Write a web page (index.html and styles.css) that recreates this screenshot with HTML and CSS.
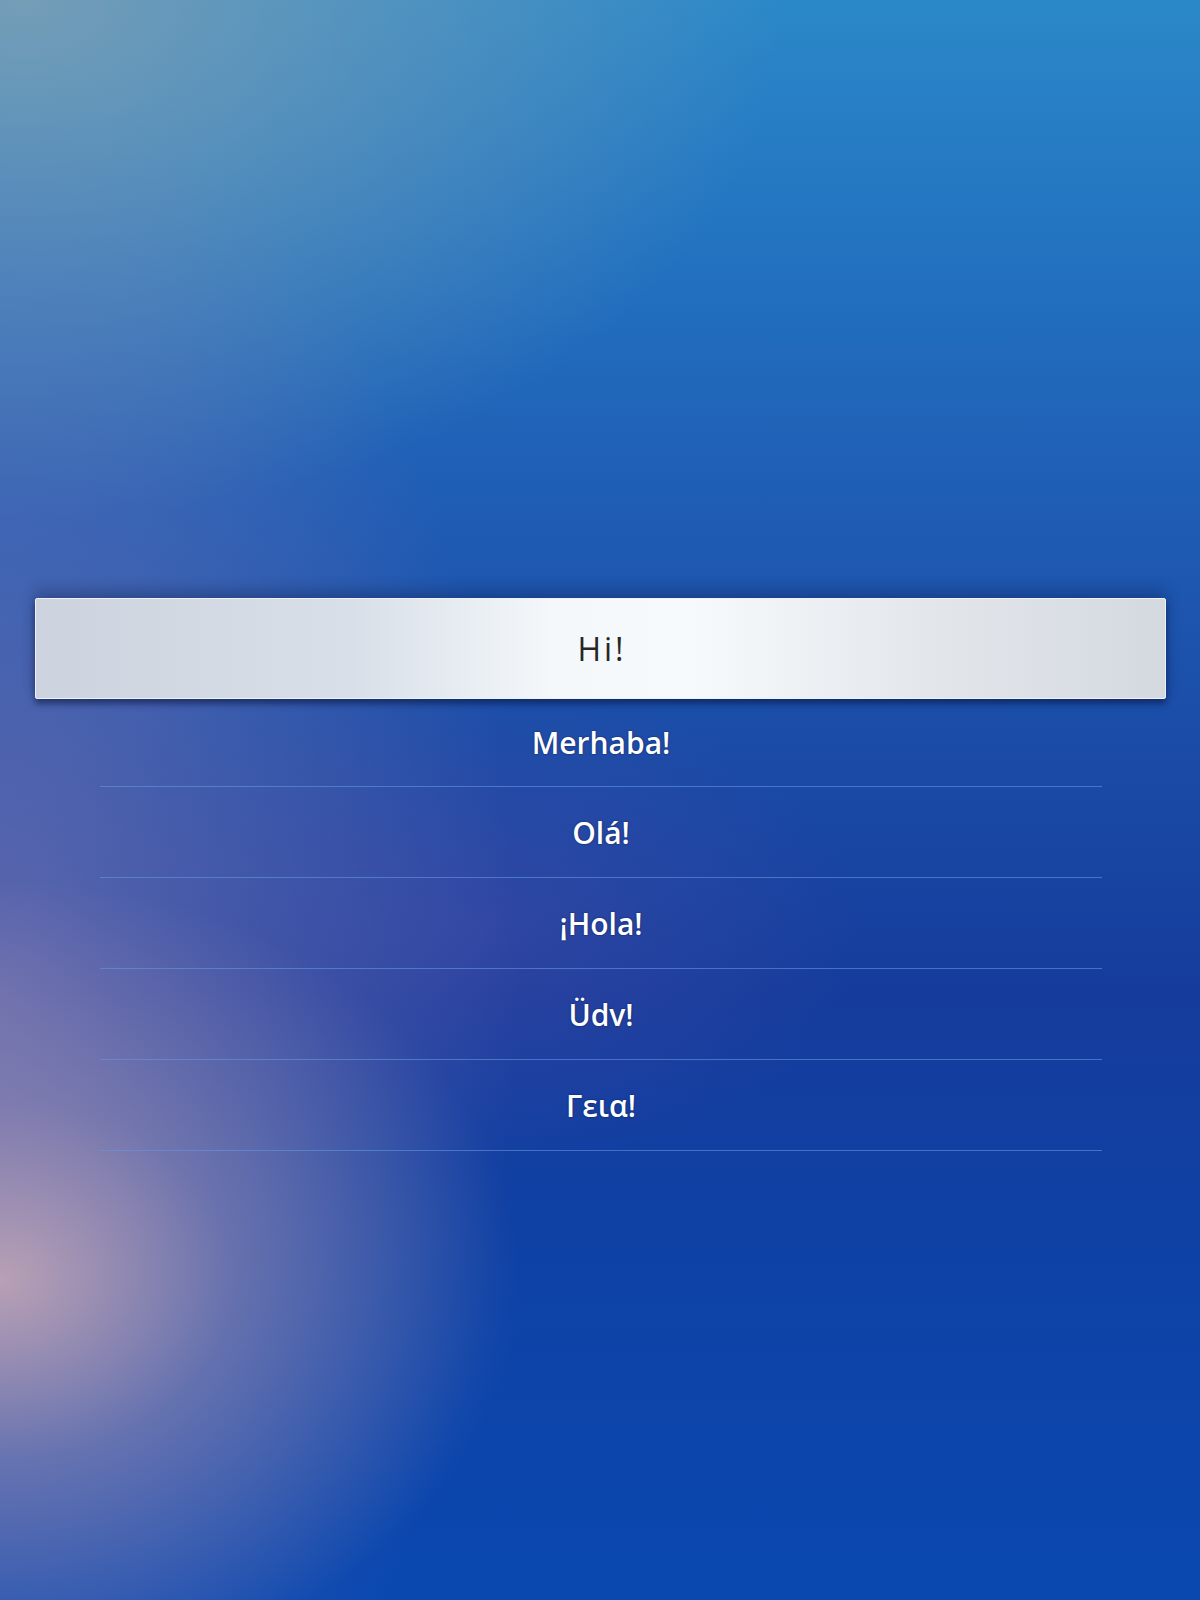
FILE: index.html
```html
<!DOCTYPE html>
<html lang="en">
<head>
<meta charset="utf-8">
<title>Language</title>
<link rel="stylesheet" href="styles.css">
</head>
<body>
<div class="screen">
  <div class="menu">
    <div class="selected"><span>Hi!</span></div>
    <ul class="list">
      <li class="item first">Merhaba!</li>
      <li class="item">Olá!</li>
      <li class="item">¡Hola!</li>
      <li class="item">Üdv!</li>
      <li class="item">Γεια!</li>
    </ul>
  </div>
</div>
</body>
</html>
```

FILE: styles.css
```css
html, body {
  margin: 0;
  padding: 0;
}
body {
  width: 1200px;
  height: 1600px;
  overflow: hidden;
  font-family: "Open Sans", "Noto Sans", sans-serif;
}
.screen {
  width: 1200px;
  height: 1600px;
  box-sizing: border-box;
  padding-top: 598px;
  background:
    radial-gradient(ellipse 520px 400px at 0% 80%, rgba(205,172,182,0.85), rgba(200,168,180,0.35) 45%, rgba(195,165,180,0) 100%),
    radial-gradient(ellipse 520px 900px at 0% 62%, rgba(125,120,180,0.7), rgba(125,120,180,0) 100%),
    radial-gradient(ellipse 380px 240px at 40% 58%, rgba(95,80,170,0.35), rgba(95,80,170,0) 100%),
    radial-gradient(ellipse 760px 520px at 2% 0%, rgba(120,158,182,0.95), rgba(120,158,182,0) 100%),
    linear-gradient(180deg, #2b88c8 0%, #2272c0 16%, #1f5cb4 32%, #1a4aa6 48%, #153c9c 62%, #0e42a6 80%, #0a48b0 100%);
}
.menu {
  display: flex;
  flex-direction: column;
}
.selected {
  margin: 0 34px 0 35px;
  height: 101px;
  box-sizing: border-box;
  display: flex;
  align-items: center;
  justify-content: center;
  border: 1px solid #eef2f6;
  border-radius: 2px;
  background: linear-gradient(90deg, #ccd3de 0%, #d9dfe8 28%, #f4f8fb 46%, #f6fafc 58%, #e2e6eb 80%, #d4d9e0 100%);
  box-shadow: 0 5px 6px rgba(10, 20, 60, 0.55), 0 -8px 14px rgba(15, 25, 70, 0.3);
}
.selected span {
  font-size: 32px;
  color: #262626;
  letter-spacing: 3px;
  padding-left: 3px;
  font-weight: 400;
}
.list {
  list-style: none;
  margin: 0 98px 0 100px;
  padding: 0;
}
.item {
  height: 90px;
  display: flex;
  align-items: center;
  justify-content: center;
  border-bottom: 1px solid rgba(100, 150, 225, 0.6);
  color: #ffffff;
  font-size: 30px;
  font-weight: 600;
  text-shadow: 0 0 2px rgba(0, 10, 50, 0.7);
}
.item.first {
  height: 87px;
}
```
